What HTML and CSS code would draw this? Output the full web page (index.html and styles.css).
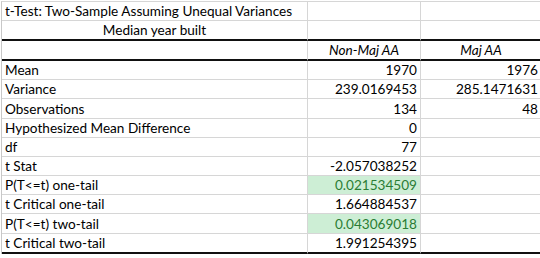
FILE: index.html
```html
<!DOCTYPE html>
<html>
<head>
<meta charset="utf-8">
<link rel="stylesheet" href="styles.css">
</head>
<body>
<div class="sheet">
  <div class="c">t-Test: Two-Sample Assuming Unequal Variances</div><div class="c"></div><div class="c"></div>
  <div class="c center thick">Median year built</div><div class="c thick"></div><div class="c thick"></div>
  <div class="c thick"></div><div class="c center italic thick">Non-Maj AA</div><div class="c center italic thick">Maj AA</div>
  <div class="c">Mean</div><div class="c num">1970</div><div class="c num">1976</div>
  <div class="c">Variance</div><div class="c num">239.0169453</div><div class="c num">285.1471631</div>
  <div class="c">Observations</div><div class="c num">134</div><div class="c num">48</div>
  <div class="c">Hypothesized Mean Difference</div><div class="c num">0</div><div class="c"></div>
  <div class="c">df</div><div class="c num">77</div><div class="c"></div>
  <div class="c">t Stat</div><div class="c num">-2.057038252</div><div class="c"></div>
  <div class="c">P(T&lt;=t) one-tail</div><div class="c num good">0.021534509</div><div class="c"></div>
  <div class="c">t Critical one-tail</div><div class="c num">1.664884537</div><div class="c"></div>
  <div class="c">P(T&lt;=t) two-tail</div><div class="c num good">0.043069018</div><div class="c"></div>
  <div class="c thick">t Critical two-tail</div><div class="c num thick">1.991254395</div><div class="c thick"></div>
</div>
</body>
</html>
```
FILE: styles.css
```css
html, body {
  margin: 0;
  padding: 0;
  background: #ffffff;
  overflow: hidden;
}
body {
  font-family: Lato, "Open Sans", sans-serif;
  font-size: 13.6px;
  color: #000000;
}
.sheet {
  display: grid;
  grid-template-columns: 306px 113px 121px;
  grid-template-rows: 19px 20px 20px 19px 19px 20px 19px 19px 19px 19px 19px 20px 20px;
  margin: 1px 0 0 1px;
  border-top: 1px solid #d6d6d6;
  border-left: 1px solid #c8c8c8;
}
.c {
  display: flex;
  align-items: flex-end;
  border-right: 1px solid #d6d6d6;
  border-bottom: 1px solid #d6d6d6;
  padding: 0 3px;
  line-height: 18px;
  white-space: nowrap;
}
.center { justify-content: center; }
.italic { font-style: italic; }
.num { justify-content: flex-end; padding-right: 3px; }
.thick { border-bottom: 2px solid #111111; }
.good {
  background: #cdeed5;
  color: #2a7d34;
}
```
